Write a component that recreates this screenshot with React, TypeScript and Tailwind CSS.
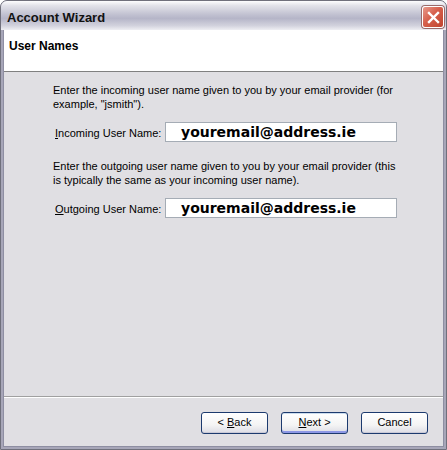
import React from 'react';

const uiFont = { fontFamily: '"Liberation Sans", Arial, sans-serif' };

function WizardButton({ children, focused }: { children: React.ReactNode; focused?: boolean }) {
  return (
    <button
      className={`w-[67px] h-[22px] rounded-[3px] border border-[#1c3a6e] text-[11px] text-black bg-[linear-gradient(to_bottom,#ffffff_0%,#f4f4f4_60%,#dcdce4_100%)] ${
        focused ? 'shadow-[inset_0_-2px_0_#8d98e6,inset_0_1px_0_#cde]' : 'shadow-[inset_0_-1px_0_#c9c9d6]'
      }`}
    >
      <span className="whitespace-pre">{children}</span>
    </button>
  );
}

function Field({ hotkey, rest, value }: { hotkey: string; rest: string; value: string }) {
  return (
    <div className="flex items-center">
      <label className="w-[112px] text-[11px] pt-[2px] pl-[2px]">
        <span className="underline">{hotkey}</span>
        {rest}
      </label>
      <div
        className="w-[232px] h-[20px] bg-white border border-[#a5acb5] pl-[15px] flex items-center text-[14px] font-bold text-black"
        style={{ fontFamily: '"DejaVu Sans", Verdana, sans-serif' }}
      >
        {value}
      </div>
    </div>
  );
}

export default function App() {
  return (
    <div className="w-[447px] h-[450px] bg-white" style={uiFont}>
      <div className="w-[447px] h-[450px] flex flex-col rounded-t-[7px] border border-[#70707c] bg-[#a7a6b8] overflow-hidden">
        <div className="h-[29px] shrink-0 flex items-center justify-between pl-[6px] pr-[2px] bg-[linear-gradient(to_bottom,#fdfdfe_0%,#e3e3ea_15%,#c3c3d2_45%,#b5b5c8_60%,#d2d2dd_85%,#eeeef3_100%)]">
          <span className="text-[13px] font-bold text-[#111] pt-[4px]">Account Wizard</span>
          <div className="w-[22px] h-[22px] mt-[3px] rounded-[3px] border border-white bg-[linear-gradient(135deg,#e89a8c_0%,#d65f4c_45%,#c0452f_100%)] flex items-center justify-center shadow-[0_0_0_1px_#9a6a6a]">
            <svg width="13" height="13" viewBox="0 0 13 13">
              <path d="M2 2 L11 11 M11 2 L2 11" stroke="white" strokeWidth="2.4" strokeLinecap="square" />
            </svg>
          </div>
        </div>
        <div className="flex-1 flex flex-col mx-[2px] mb-[2px] border-l border-r border-b border-[#8e8ea2] bg-[#e0dfe3]">
          <div className="h-[42px] shrink-0 bg-white border-b border-[#808080] pl-[5px] pt-[3px]">
            <span className="text-[12px] font-bold text-black">User Names</span>
          </div>
          <div className="flex-1 pl-[49px] pt-[11px] text-[11px] text-black leading-[14px]">
            <div className="w-[348px]">
              <p>Enter the incoming user name given to you by your email provider (for example, "jsmith").</p>
            </div>
            <div className="mt-[11px]">
              <Field hotkey="I" rest="ncoming User Name:" value="youremail@address.ie" />
            </div>
            <div className="w-[348px] mt-[17px]">
              <p>
                Enter the outgoing user name given to you by your email provider (this is typically the same as your incoming user name).
              </p>
            </div>
            <div className="mt-[11px]">
              <Field hotkey="O" rest="utgoing User Name:" value="youremail@address.ie" />
            </div>
          </div>
          <div className="h-[2px] shrink-0 border-t border-[#a0a0a0] border-b border-b-white" />
          <div className="h-[48px] shrink-0 flex items-center justify-end gap-[13px] pr-[15px] pt-[1px]">
            <WizardButton>
              {'< '}
              <span className="underline">B</span>ack
            </WizardButton>
            <WizardButton focused>
              <span className="underline">N</span>ext {'>'}
            </WizardButton>
            <WizardButton>Cancel</WizardButton>
          </div>
        </div>
      </div>
    </div>
  );
}
